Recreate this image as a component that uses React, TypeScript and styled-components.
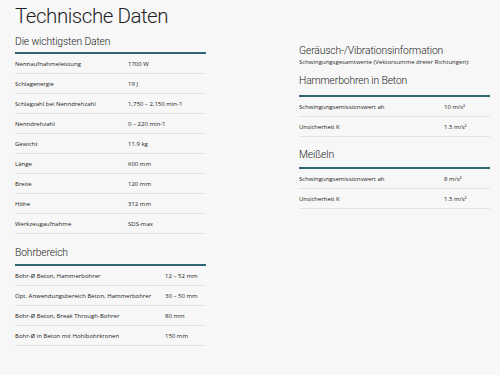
import React from "react";
import styled, { createGlobalStyle } from "styled-components";

const Global = createGlobalStyle`
  html, body { margin: 0; padding: 0; background: #f7f7f7; }
  body { font-family: "Open Sans", "Liberation Sans", sans-serif; color: #222; }
`;

const Page = styled.div`
  width: 500px;
  height: 375px;
  box-sizing: border-box;
  padding: 0 10px 0 15px;
  overflow: hidden;
`;

const Title = styled.h1`
  margin: 0;
  padding-top: 2px;
  height: 30px;
  font-family: Roboto, "Open Sans", sans-serif;
  font-size: 20.5px;
  font-weight: 300;
  letter-spacing: -0.45px;
  line-height: 28px;
  color: #1e1e1e;
`;

const Columns = styled.div`
  display: grid;
  grid-template-columns: 191px 191px;
  column-gap: 93px;
`;

const Column = styled.div<{ $top: number }>`
  display: flex;
  flex-direction: column;
  padding-top: ${(p) => p.$top}px;
`;

const Heading = styled.h2<{ $lh: number; $mt?: number }>`
  margin: ${(p) => p.$mt ?? 0}px 0 0;
  font-family: Roboto, "Open Sans", sans-serif;
  font-size: 10.3px;
  font-weight: 300;
  letter-spacing: -0.12px;
  line-height: ${(p) => p.$lh}px;
  color: #222;
  white-space: nowrap;
`;

const Sub = styled.p`
  margin: 0;
  font-size: 6px;
  line-height: 8px;
  color: #2a2a2a;
  white-space: nowrap;
`;

const Table = styled.div`
  border-top: 2px solid #2f6676;
`;

const Row = styled.div<{ $label: number }>`
  display: grid;
  grid-template-columns: ${(p) => p.$label}px 1fr;
  height: 20px;
  align-items: center;
  border-bottom: 1px solid #e4e4e4;
  box-sizing: border-box;
  font-size: 6px;
  color: #222;
`;

const Cell = styled.span`
  white-space: nowrap;
`;

type Item = [string, React.ReactNode];

const main: Item[] = [
  ["Nennaufnahmeleistung", "1700 W"],
  ["Schlagenergie", "19 J"],
  ["Schlagzahl bei Nenndrehzahl", "1,750 – 2,150 min-1"],
  ["Nenndrehzahl", "0 – 220 min-1"],
  ["Gewicht", "11.9 kg"],
  ["Länge", "600 mm"],
  ["Breite", "120 mm"],
  ["Höhe", "312 mm"],
  ["Werkzeugaufnahme", "SDS-max"],
];

const bohr: Item[] = [
  ["Bohr-Ø Beton, Hammerbohrer", "12 – 52 mm"],
  ["Opt. Anwendungsbereich Beton, Hammerbohrer", "30 – 50 mm"],
  ["Bohr-Ø Beton, Break Through-Bohrer", "80 mm"],
  ["Bohr-Ø in Beton mit Hohlbohrkronen", "150 mm"],
];

const hammer: Item[] = [
  ["Schwingungsemissionswert ah", "10 m/s²"],
  ["Unsicherheit K", "1.5 m/s²"],
];

const meissel: Item[] = [
  ["Schwingungsemissionswert ah", "8 m/s²"],
  ["Unsicherheit K", "1.5 m/s²"],
];

const Rows = ({ items, label }: { items: Item[]; label: number }) => (
  <Table>
    {items.map(([k, v]) => (
      <Row key={k} $label={label}>
        <Cell>{k}</Cell>
        <Cell>{v}</Cell>
      </Row>
    ))}
  </Table>
);

export default function App() {
  return (
    <Page>
      <Global />
      <Title>Technische Daten</Title>
      <Columns>
        <Column $top={0}>
          <Heading $lh={20}>Die wichtigsten Daten</Heading>
          <Rows items={main} label={113} />
          <Heading $lh={22} $mt={8}>Bohrbereich</Heading>
          <Rows items={bohr} label={150} />
        </Column>
        <Column $top={12}>
          <Heading $lh={14}>Geräusch-/Vibrationsinformation</Heading>
          <Sub>Schwingungsgesamtwerte (Vektorsumme dreier Richtungen):</Sub>
          <Heading $lh={29}>Hammerbohren in Beton</Heading>
          <Rows items={hammer} label={145} />
          <Heading $lh={24} $mt={6}>Meißeln</Heading>
          <Rows items={meissel} label={145} />
        </Column>
      </Columns>
    </Page>
  );
}
